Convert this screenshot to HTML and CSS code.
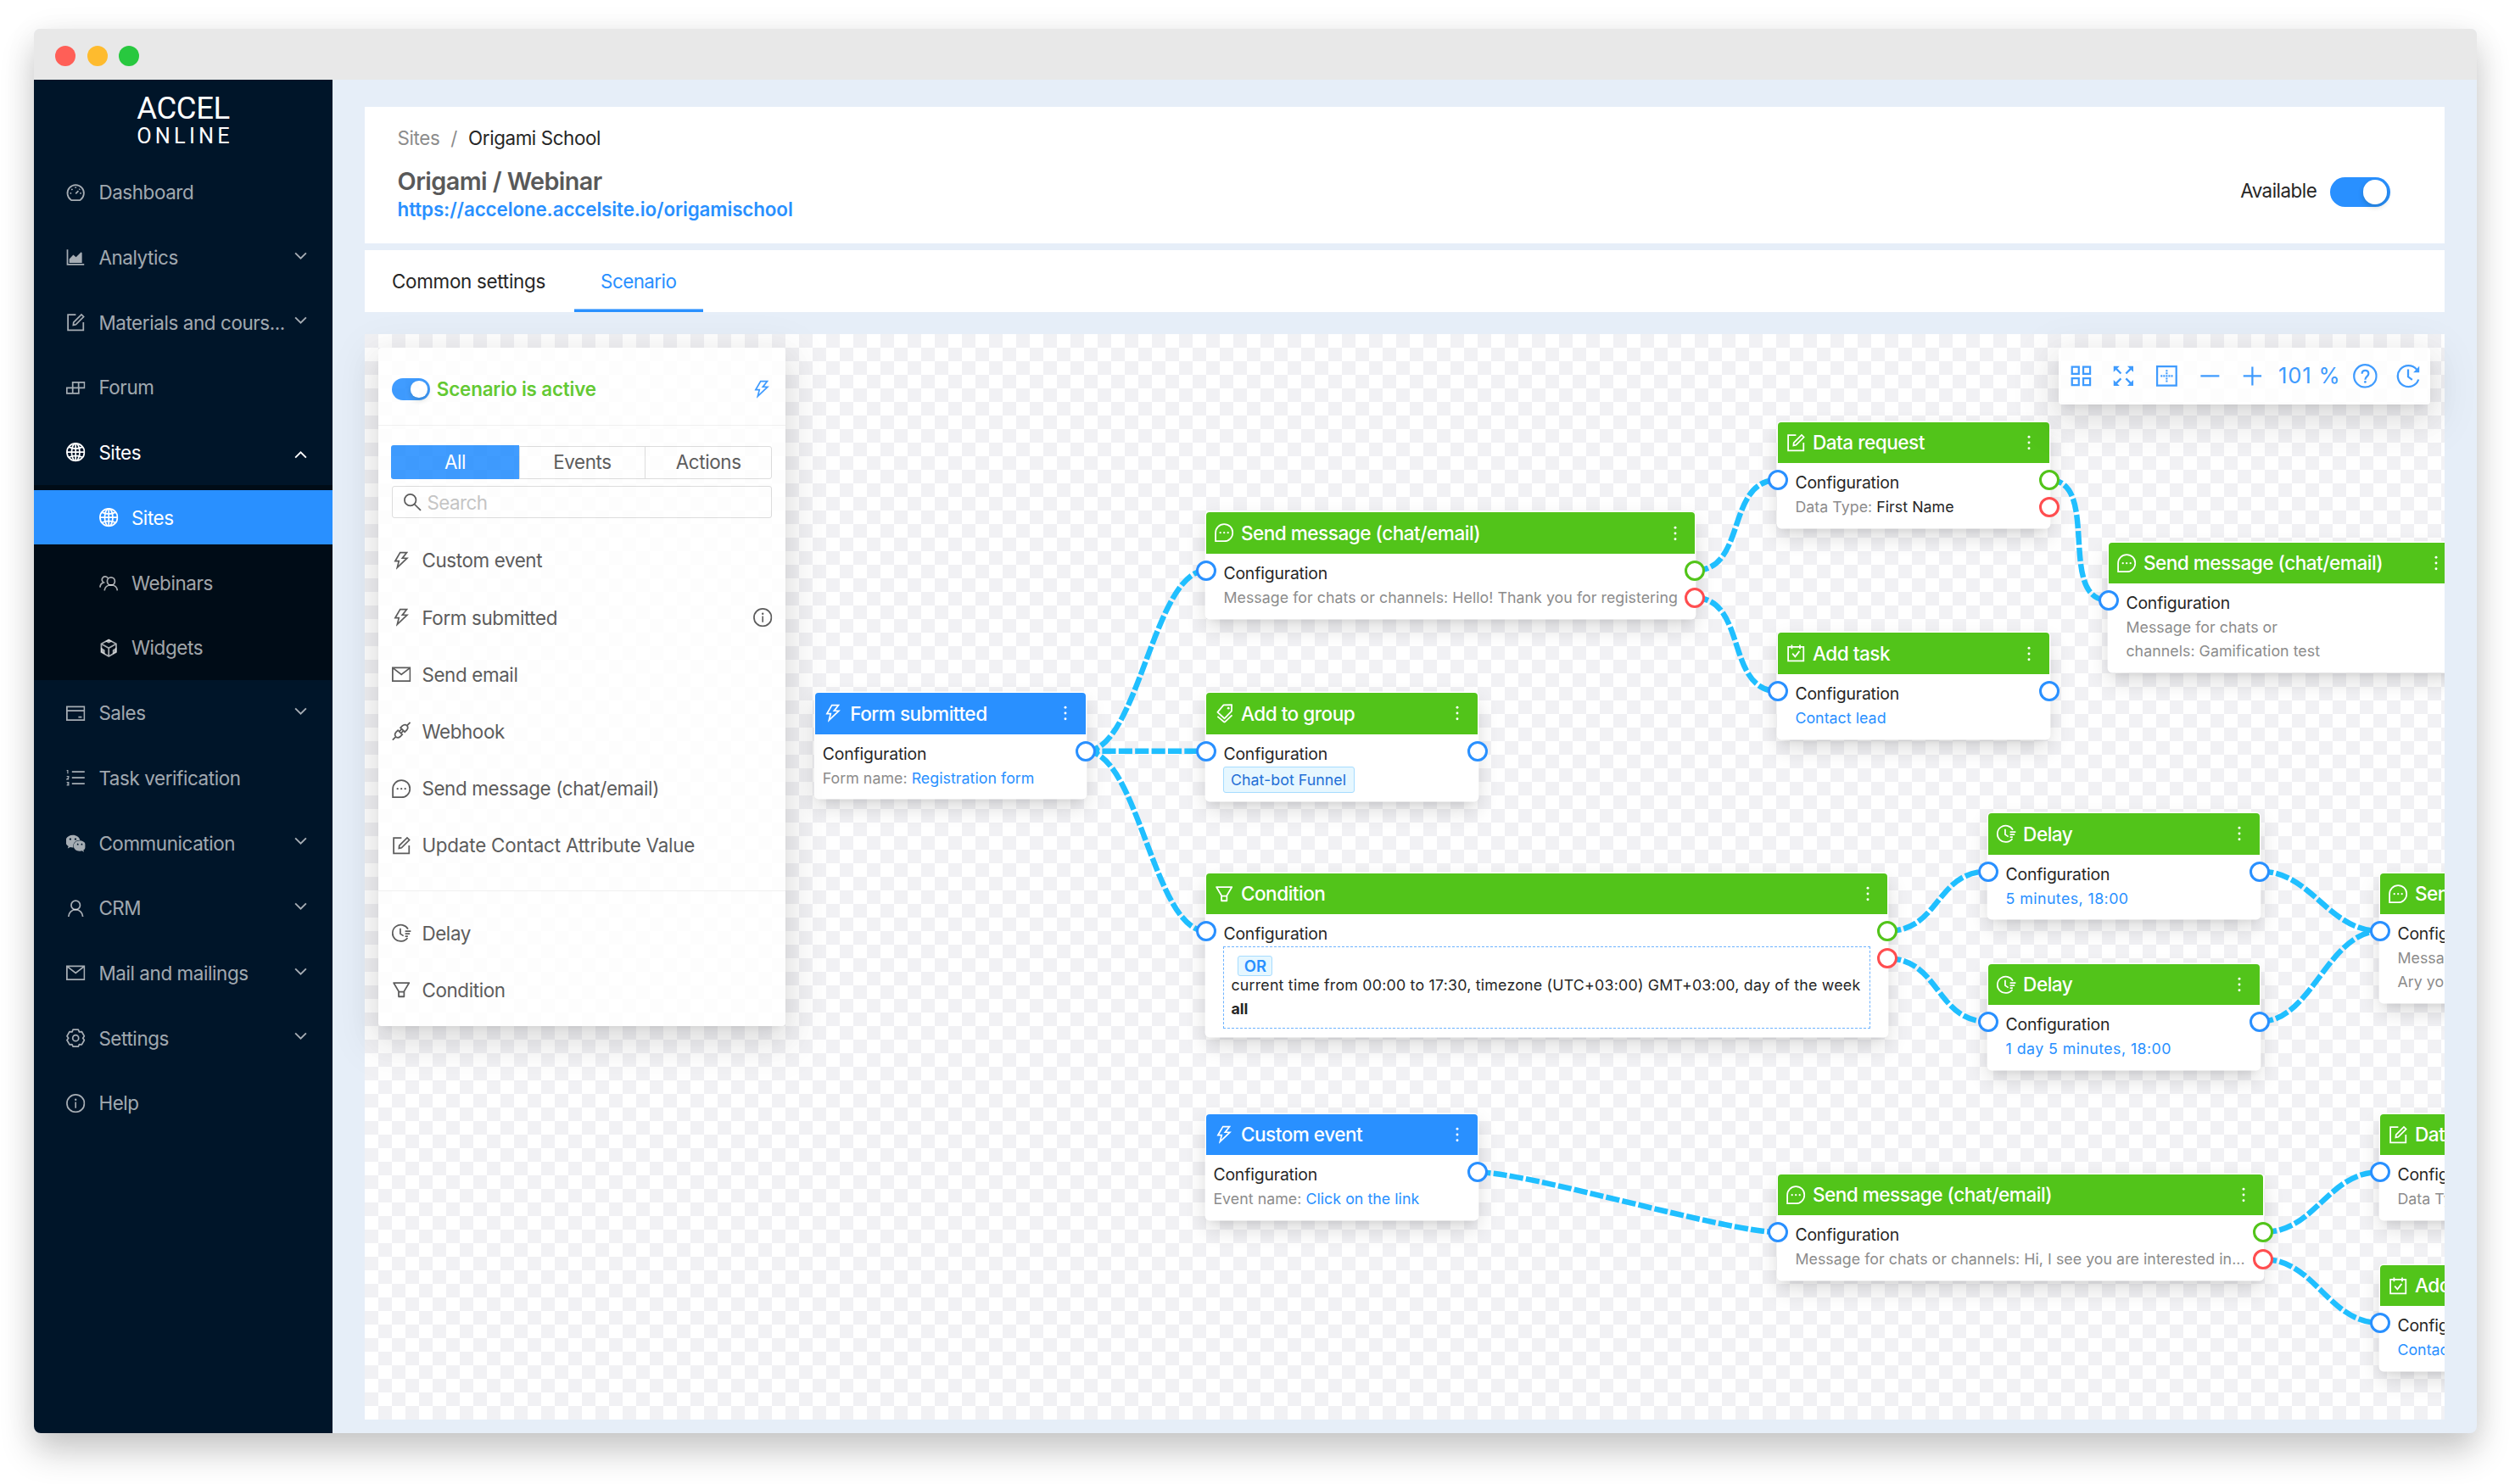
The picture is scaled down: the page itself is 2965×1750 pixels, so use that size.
FILE: index.html
```html
<!DOCTYPE html>
<html lang="en">
<head>
<meta charset="utf-8">
<title>Accel Online – Scenario</title>
<link rel="stylesheet" href="styles.css">
</head>
<body>
<svg class="sprite" aria-hidden="true">
  <symbol id="i-dashboard" viewBox="64 64 896 896"><path class="s" d="M290 852a388 388 0 1 1 444 0q-20 14-50 14H340q-30 0-50-14zM512 560l130-130M512 230v60M250 540h60M714 540h60M316 340l44 44M708 340l-30 30"/></symbol>
  <symbol id="i-area" viewBox="64 64 896 896"><path class="s" d="M124 150v710h790"/><path d="M210 780V600l190-200 130 110 240-240 40 40v470z"/></symbol>
  <symbol id="i-form" viewBox="64 64 896 896"><path class="s" d="M520 148H148v728h728V500M400 640l14-130 370-370 104 104-370 370z"/></symbol>
  <symbol id="i-build" viewBox="64 64 896 896"><path class="s" d="M96 520h560v260H96zM372 260h556v260H372zM372 520v260M650 260v260"/></symbol>
  <symbol id="i-globe" viewBox="64 64 896 896"><circle class="s" cx="512" cy="512" r="412"/><ellipse class="s" cx="512" cy="512" rx="190" ry="412"/><path class="s" d="M100 512h824M512 100v824M190 270q322 150 644 0M190 754q322-150 644 0"/></symbol>
  <symbol id="i-team" viewBox="64 64 896 896"><circle class="s" cx="620" cy="440" r="180"/><path class="s" d="M310 880c10-160 140-262 310-262s290 102 300 262M470 290a150 150 0 1 0-200 210c-90 30-160 100-170 230"/></symbol>
  <symbol id="i-box" viewBox="64 64 896 896"><path class="s" d="M512 120l350 196v392L512 904 162 708V316zM162 316l350 200 350-200M512 516v388"/><path d="M512 100l170 90-170 96-170-96zM150 480l180 120v200L150 700zM874 480L694 600v200l180-100z"/></symbol>
  <symbol id="i-card" viewBox="64 64 896 896"><path class="s" d="M100 196h824v632H100zM100 392h824M640 690h160"/></symbol>
  <symbol id="i-list" viewBox="64 64 896 896"><path class="s" d="M336 230h600M336 512h600M336 794h600"/><path class="t" d="M90 170h50v140M90 450h90v60l-90 70h100M90 730h90v130H90M110 795h70"/></symbol>
  <symbol id="i-wechat" viewBox="64 64 896 896"><path fill-rule="evenodd" d="M690 377c11 0 22 1 33 2-30-139-178-242-347-242C187 137 32 267 32 431c0 95 52 173 138 233l-34 104 120-60c43 9 78 17 121 17 11 0 21-1 32-1-7-24-11-48-11-73 0-151 130-274 292-274zM506 284c26 0 43 17 43 43s-17 43-43 43-52-17-52-43 26-43 52-43zM264 370c-26 0-52-17-52-43s26-43 52-43 43 17 43 43-17 43-43 43z"/><path fill-rule="evenodd" d="M1000 646c0-138-138-250-293-250-164 0-293 112-293 250s129 250 293 250c34 0 69-9 103-17l95 52-26-87c69-52 121-120 121-198zM612 603a34 34 0 1 1 1 0zM801 603a34 34 0 1 1 1 0z"/></symbol>
  <symbol id="i-user" viewBox="64 64 896 896"><circle class="s" cx="512" cy="362" r="210"/><path class="s" d="M174 906c8-186 150-334 338-334s330 148 338 334"/></symbol>
  <symbol id="i-mail" viewBox="64 64 896 896"><path class="s" d="M100 196h824v632H100zM120 220l392 300 392-300"/></symbol>
  <symbol id="i-gear" viewBox="64 64 896 896"><path class="s" stroke-linejoin="round" d="M389 110H635L682 218L798 205L921 418L852 512L921 606L798 819L682 806L635 914H389L342 806L226 819L103 606L172 512L103 418L226 205L342 218z"/><circle class="s" cx="512" cy="512" r="140"/></symbol>
  <symbol id="i-info" viewBox="64 64 896 896"><circle class="s" cx="512" cy="512" r="410"/><circle cx="512" cy="336" r="48"/><path d="M480 448h64v288h-64z"/></symbol>
  <symbol id="i-bolt" viewBox="64 64 896 896"><path d="M848 359.3H627.7L825.8 109c4.1-5.3.4-13-6.3-13H436c-2.8 0-5.5 1.5-6.9 4L170 547.5c-3.1 5.3.7 12 6.9 12h174.4l-89.4 357.6c-1.9 7.8 7.5 13.3 13.3 7.7L853.5 373c5.2-4.9 1.7-13.7-5.5-13.7zM378.2 732.5l60.3-241H281.1l189.6-327.4h224.6L487 427.4h211L378.2 732.5z"/></symbol>
  <symbol id="i-api" viewBox="64 64 896 896"><path class="s" d="M96 928l130-130M798 226L928 96M470 350l90-90c70-60 160-60 215-12 48 55 48 145-12 215l-90 90zM554 674l-90 90c-70 60-160 60-215 12-48-55-48-145 12-215l90-90zM411 531l110-110M493 613l110-110"/></symbol>
  <symbol id="i-msg" viewBox="64 64 896 896"><path class="s" d="M108 914V512a404 404 0 1 1 404 402z"/><circle cx="332" cy="512" r="46"/><circle cx="512" cy="512" r="46"/><circle cx="692" cy="512" r="46"/></symbol>
  <symbol id="i-delay" viewBox="64 64 896 896"><path class="s" d="M824 330A388 388 0 1 0 800 740M462 290v260l150 100M690 430h290M690 552h220M690 674h130"/></symbol>
  <symbol id="i-filter" viewBox="64 64 896 896"><path d="M880.1 154H143.9c-24.5 0-39.8 26.7-27.5 48L349 597.4V838c0 17.7 14.2 32 31.8 32h262.4c17.6 0 31.8-14.3 31.8-32V597.4L907.7 202c12.2-21.3-3.1-48-27.6-48zM603.4 798H420.6V642h182.9v156zm9.6-236.6l-9.5 16.6h-183l-9.5-16.6L212.7 226h598.6L613 561.4z"/></symbol>
  <symbol id="i-tags" viewBox="64 64 896 896"><path class="s" stroke-linejoin="round" d="M485 120l385-10-8 300-337 345-325-295zM200 660l325 275 360-340"/><circle cx="713" cy="270" r="56"/></symbol>
  <symbol id="i-task" viewBox="64 64 896 896"><path class="s" d="M148 220h728v660H148zM320 120v190M704 120v190M350 530l130 150 200-260"/></symbol>
  <symbol id="i-search" viewBox="64 64 896 896"><circle class="s" cx="412" cy="412" r="270"/><path class="s" d="M604 604l300 300"/></symbol>
  <symbol id="i-apps" viewBox="64 64 896 896"><path class="s" d="M180 180h250v250H180zM594 180h250v250H594zM180 594h250v250H180zM594 594h250v250H594z"/></symbol>
  <symbol id="i-expand" viewBox="64 64 896 896"><path class="s" d="M240 240l180 180M784 240L604 420M240 784l180-180M784 784L604 604"/><path d="M150 150h220L150 370zM874 150v220L654 150zM150 874V654l220 220zM874 874H654l220-220z"/></symbol>
  <symbol id="i-border" viewBox="64 64 896 896"><path class="s" d="M160 160h704v704H160z"/><path d="M480 290h64v64h-64zM480 385h64v64h-64zM480 480h64v64h-64zM480 575h64v64h-64zM480 670h64v64h-64zM290 480h64v64h-64zM385 480h64v64h-64zM575 480h64v64h-64zM670 480h64v64h-64z"/></symbol>
  <symbol id="i-minus" viewBox="64 64 896 896"><path class="s" d="M170 512h684"/></symbol>
  <symbol id="i-plus" viewBox="64 64 896 896"><path class="s" d="M180 512h664M512 170v684"/></symbol>
  <symbol id="i-help" viewBox="64 64 896 896"><circle class="s" cx="512" cy="512" r="410"/><path class="s" d="M394 430c0-160 240-160 240 0 0 100-122 90-122 220"/><circle cx="512" cy="732" r="42"/></symbol>
  <symbol id="i-clock" viewBox="64 64 896 896"><path class="s" d="M812 270A390 390 0 1 0 880 640M500 270v270l150 110"/><path d="M910 150v230H690z"/></symbol>
  <symbol id="i-more" viewBox="0 0 1024 1024"><circle cx="512" cy="200" r="68"/><circle cx="512" cy="512" r="68"/><circle cx="512" cy="824" r="68"/></symbol>
  <symbol id="i-chev" viewBox="0 0 16 10"><path d="M1.2 1.2L8 7.8l6.8-6.6" fill="none" stroke="currentColor" stroke-width="2"/></symbol>
</svg>

<div class="window">
  <div class="titlebar"><i class="dot red"></i><i class="dot yellow"></i><i class="dot green"></i></div>
  <div class="app">
    <aside class="sidebar">
      <div class="logo"><span class="logo-top">ACCEL</span><span class="logo-bottom">ONLINE</span></div>
      <ul class="menu">
        <li class="item"><svg class="ic"><use href="#i-dashboard"/></svg><span>Dashboard</span></li>
        <li class="item"><svg class="ic"><use href="#i-area"/></svg><span>Analytics</span><svg class="chev"><use href="#i-chev"/></svg></li>
        <li class="item"><svg class="ic"><use href="#i-form"/></svg><span>Materials and cours...</span><svg class="chev"><use href="#i-chev"/></svg></li>
        <li class="item"><svg class="ic"><use href="#i-build"/></svg><span>Forum</span></li>
        <li class="item open"><svg class="ic"><use href="#i-globe"/></svg><span>Sites</span><svg class="chev up"><use href="#i-chev"/></svg></li>
        <li>
          <ul class="submenu">
            <li class="item selected"><svg class="ic"><use href="#i-globe"/></svg><span>Sites</span></li>
            <li class="item"><svg class="ic"><use href="#i-team"/></svg><span>Webinars</span></li>
            <li class="item"><svg class="ic"><use href="#i-box"/></svg><span>Widgets</span></li>
          </ul>
        </li>
        <li class="item"><svg class="ic"><use href="#i-card"/></svg><span>Sales</span><svg class="chev"><use href="#i-chev"/></svg></li>
        <li class="item"><svg class="ic"><use href="#i-list"/></svg><span>Task verification</span></li>
        <li class="item"><svg class="ic"><use href="#i-wechat"/></svg><span>Communication</span><svg class="chev"><use href="#i-chev"/></svg></li>
        <li class="item"><svg class="ic"><use href="#i-user"/></svg><span>CRM</span><svg class="chev"><use href="#i-chev"/></svg></li>
        <li class="item"><svg class="ic"><use href="#i-mail"/></svg><span>Mail and mailings</span><svg class="chev"><use href="#i-chev"/></svg></li>
        <li class="item"><svg class="ic"><use href="#i-gear"/></svg><span>Settings</span><svg class="chev"><use href="#i-chev"/></svg></li>
        <li class="item"><svg class="ic"><use href="#i-info"/></svg><span>Help</span></li>
      </ul>
    </aside>

    <main class="main">
      <header class="page-head">
        <div class="head-text">
          <nav class="crumbs"><span class="muted">Sites</span><span class="sep">/</span><span>Origami School</span></nav>
          <h1 class="title">Origami / Webinar</h1>
          <a class="url">https://accelone.accelsite.io/origamischool</a>
        </div>
        <div class="avail"><span>Available</span><i class="switch"></i></div>
      </header>
      <nav class="tabs"><span class="tab">Common settings</span><span class="tab active">Scenario</span></nav>

      <section class="scenario">
        <div class="canvas">
          <svg class="edges" viewBox="0 0 2452 1280">
            <path d="M850 491.7C912 491.7 930 278.7 992 278.7"/>
            <path d="M850 491.7H992"/>
            <path d="M850 491.7C912 491.7 930 704 992 704"/>
            <path d="M1568 278.7C1630 278.7 1604 172 1666 172"/>
            <path d="M1568 311C1630 311 1604 421 1666 421"/>
            <path d="M1985.5 172C2047.5 172 1994 314 2056 314"/>
            <path d="M1795 704C1857 704 1852 633.5 1914 633.5"/>
            <path d="M1795 736.3C1857 736.3 1852 810.8 1914 810.8"/>
            <path d="M2234 633.5C2296 633.5 2314 704 2376 704"/>
            <path d="M2234 810.8C2296 810.8 2314 704 2376 704"/>
            <path d="M1311.5 988.3C1373.5 988.3 1604 1059 1666 1059"/>
            <path d="M2238 1059C2300 1059 2314 988 2376 988"/>
            <path d="M2238 1091C2300 1091 2314 1166 2376 1166"/>
          </svg>

          <article class="node trigger" style="left:531.3px;top:423.2px;width:318.7px">
            <header><svg class="ic"><use href="#i-bolt"/></svg><b>Form submitted</b><svg class="more"><use href="#i-more"/></svg></header>
            <div class="body"><p class="cfg">Configuration</p><p class="line">Form name: <a>Registration form</a></p></div>
            <i class="port out"></i>
          </article>

          <article class="node" style="left:992px;top:210.4px;width:576px">
            <header><svg class="ic"><use href="#i-msg"/></svg><b>Send message (chat/email)</b><svg class="more"><use href="#i-more"/></svg></header>
            <div class="body"><p class="cfg">Configuration</p><p class="line">Message for chats or channels: Hello! Thank you for registering</p></div>
            <i class="port in"></i><i class="port out yes"></i><i class="port out no"></i>
          </article>

          <article class="node" style="left:992px;top:423.2px;width:319.5px">
            <header><svg class="ic"><use href="#i-tags"/></svg><b>Add to group</b><svg class="more"><use href="#i-more"/></svg></header>
            <div class="body"><p class="cfg">Configuration</p><span class="tag">Chat-bot Funnel</span></div>
            <i class="port in"></i><i class="port out"></i>
          </article>

          <article class="node" style="left:992px;top:635.7px;width:803px">
            <header><svg class="ic"><use href="#i-filter"/></svg><b>Condition</b><svg class="more"><use href="#i-more"/></svg></header>
            <div class="body"><p class="cfg">Configuration</p>
              <div class="rule"><span class="or">OR</span><p class="cond wide">current time from 00:00 to 17:30, timezone (UTC+03:00) GMT+03:00, day of the week</p><p class="cond"><strong>all</strong></p></div>
            </div>
            <i class="port in"></i><i class="port out yes"></i><i class="port out no"></i>
          </article>

          <article class="node trigger" style="left:992px;top:919.8px;width:319.5px">
            <header><svg class="ic"><use href="#i-bolt"/></svg><b>Custom event</b><svg class="more"><use href="#i-more"/></svg></header>
            <div class="body"><p class="cfg">Configuration</p><p class="line">Event name: <a>Click on the link</a></p></div>
            <i class="port out"></i>
          </article>

          <article class="node" style="left:1666px;top:103.5px;width:319.5px">
            <header><svg class="ic"><use href="#i-form"/></svg><b>Data request</b><svg class="more"><use href="#i-more"/></svg></header>
            <div class="body"><p class="cfg">Configuration</p><p class="line">Data Type: <em>First Name</em></p></div>
            <i class="port in"></i><i class="port out yes"></i><i class="port out no"></i>
          </article>

          <article class="node" style="left:1666px;top:352.4px;width:319.5px">
            <header><svg class="ic"><use href="#i-task"/></svg><b>Add task</b><svg class="more"><use href="#i-more"/></svg></header>
            <div class="body"><p class="cfg">Configuration</p><p class="line"><a>Contact lead</a></p></div>
            <i class="port in"></i><i class="port out"></i>
          </article>

          <article class="node" style="left:2056px;top:245.7px;width:409px">
            <header><svg class="ic"><use href="#i-msg"/></svg><b>Send message (chat/email)</b><svg class="more"><use href="#i-more"/></svg></header>
            <div class="body"><p class="cfg">Configuration</p><p class="line">Message for chats or<br>channels: Gamification test</p></div>
            <i class="port in"></i>
          </article>

          <article class="node" style="left:1914.2px;top:565.2px;width:319.8px">
            <header><svg class="ic"><use href="#i-delay"/></svg><b>Delay</b><svg class="more"><use href="#i-more"/></svg></header>
            <div class="body"><p class="cfg">Configuration</p><p class="line num"><a>5 minutes, 18:00</a></p></div>
            <i class="port in"></i><i class="port out"></i>
          </article>

          <article class="node" style="left:1914.2px;top:742.5px;width:319.8px">
            <header><svg class="ic"><use href="#i-delay"/></svg><b>Delay</b><svg class="more"><use href="#i-more"/></svg></header>
            <div class="body"><p class="cfg">Configuration</p><p class="line num"><a>1 day 5 minutes, 18:00</a></p></div>
            <i class="port in"></i><i class="port out"></i>
          </article>

          <article class="node" style="left:2376px;top:635.7px;width:409px">
            <header><svg class="ic"><use href="#i-msg"/></svg><b>Send message (chat/email)</b></header>
            <div class="body"><p class="cfg">Configuration</p><p class="line">Message for chats or channels:<br>Ary you ready</p></div>
            <i class="port in"></i>
          </article>

          <article class="node" style="left:1666px;top:990.5px;width:572px">
            <header><svg class="ic"><use href="#i-msg"/></svg><b>Send message (chat/email)</b><svg class="more"><use href="#i-more"/></svg></header>
            <div class="body"><p class="cfg">Configuration</p><p class="line">Message for chats or channels: Hi, I see you are interested in...</p></div>
            <i class="port in"></i><i class="port out yes"></i><i class="port out no"></i>
          </article>

          <article class="node" style="left:2376px;top:919.7px;width:320px">
            <header><svg class="ic"><use href="#i-form"/></svg><b>Data request</b></header>
            <div class="body"><p class="cfg">Configuration</p><p class="line">Data Type:</p></div>
            <i class="port in"></i>
          </article>

          <article class="node" style="left:2376px;top:1097.5px;width:320px">
            <header><svg class="ic"><use href="#i-task"/></svg><b>Add task</b></header>
            <div class="body"><p class="cfg">Configuration</p><p class="line"><a>Contact lead</a></p></div>
            <i class="port in"></i>
          </article>
        </div>

        <div class="panel">
          <div class="panel-head"><i class="switch small"></i><b>Scenario is active</b><svg class="ic"><use href="#i-bolt"/></svg></div>
          <div class="seg"><span class="on">All</span><span>Events</span><span>Actions</span></div>
          <div class="search"><svg class="ic"><use href="#i-search"/></svg><span>Search</span></div>
          <ul class="actions">
            <li><svg class="ic"><use href="#i-bolt"/></svg><span>Custom event</span></li>
            <li><svg class="ic"><use href="#i-bolt"/></svg><span>Form submitted</span><svg class="ic info"><use href="#i-info"/></svg></li>
            <li><svg class="ic"><use href="#i-mail"/></svg><span>Send email</span></li>
            <li><svg class="ic"><use href="#i-api"/></svg><span>Webhook</span></li>
            <li><svg class="ic"><use href="#i-msg"/></svg><span>Send message (chat/email)</span></li>
            <li><svg class="ic"><use href="#i-form"/></svg><span class="long">Update Contact Attribute Value</span></li>
          </ul>
          <ul class="actions second">
            <li><svg class="ic"><use href="#i-delay"/></svg><span>Delay</span></li>
            <li><svg class="ic"><use href="#i-filter"/></svg><span>Condition</span></li>
          </ul>
        </div>

        <div class="toolbar">
          <svg class="ic"><use href="#i-apps"/></svg>
          <svg class="ic"><use href="#i-expand"/></svg>
          <svg class="ic"><use href="#i-border"/></svg>
          <svg class="ic"><use href="#i-minus"/></svg>
          <svg class="ic"><use href="#i-plus"/></svg>
          <span class="zoom">101 %</span>
          <svg class="ic"><use href="#i-help"/></svg>
          <svg class="ic"><use href="#i-clock"/></svg>
        </div>
      </section>
    </main>
  </div>
</div>
</body>
</html>
```

FILE: styles.css
```css
* { box-sizing: border-box; }
body {
  margin: 0;
  width: 2965px;
  height: 1750px;
  overflow: hidden;
  background: #fff;
  font-family: Inter, "Liberation Sans", sans-serif;
  font-size: 22.4px;
  line-height: 1.5715;
  color: #262626;
}
ul { list-style: none; margin: 0; padding: 0; }
p, h1 { margin: 0; }
.sprite { display: none; }
.ic { width: 22.4px; height: 22.4px; flex: none; fill: currentColor; overflow: visible; }
.s { fill: none; stroke: currentColor; stroke-width: 70; }
.t { fill: none; stroke: currentColor; stroke-width: 46; }

.window {
  width: 2880px;
  height: 1656px;
  margin: 34px 0 0 40px;
  border-radius: 7px 7px 8px 8px;
  overflow: hidden;
  background: #e6eef8;
  box-shadow: 0 22px 40px rgba(0, 0, 0, .2), 0 4px 40px rgba(0, 0, 0, .06);
}
.titlebar { height: 60px; background: #e8e8e8; display: flex; align-items: center; gap: 13.6px; padding: 4px 0 0 25px; }
.dot { width: 24px; height: 24px; border-radius: 50%; }
.red { background: #ff5f57; }
.yellow { background: #febb2e; }
.green { background: #28c83f; }
.app { display: flex; height: 1596px; }

.sidebar { width: 352px; background: #001529; color: rgba(255, 255, 255, .65); letter-spacing: -.0175em; }
.logo { height: 94.6px; padding-top: 14px; display: flex; flex-direction: column; align-items: center; color: #fff; font-family: Roboto, sans-serif; }
.logo-top { font-size: 36.5px; line-height: 40px; letter-spacing: -.4px; }
.logo-bottom { font-size: 25.3px; line-height: 24px; letter-spacing: 4.2px; margin: 1px -4px 0 0; }
.item { height: 64px; padding: 0 29.8px 0 38px; display: flex; align-items: center; white-space: nowrap; }
.item .ic { margin-right: 16px; }
.menu > .item { height: 76.7px; }
.chev { width: 15px; height: 10px; margin-left: auto; margin-top: -4px; flex: none; }
.up { transform: rotate(180deg); margin-top: 4px; }
.open { color: #fff; }
.submenu { background: #000c17; padding: 6.4px 0; display: flex; flex-direction: column; gap: 12.8px; }
.submenu .item { padding-left: 76.5px; }
.selected { background: #2990ff; color: #fff; }

.main { width: 2528px; padding: 32px 38px 16px; overflow: hidden; letter-spacing: -.018em; }
.page-head { height: 161px; background: #fff; padding: 19px 64.4px 0 38.6px; display: flex; justify-content: space-between; }
.crumbs { display: flex; line-height: 36px; }
.muted, .sep { color: #8c8c8c; }
.sep { margin: 0 13px; }
.title { margin-top: 14px; font-size: 28.8px; line-height: 38px; font-weight: 600; color: #595959; letter-spacing: -.02em; }
.url { display: block; margin-top: -1.5px; font-weight: 600; line-height: 30px; color: #2990ff; letter-spacing: -.005em; }
.avail { display: flex; align-items: center; gap: 16px; height: 35px; margin-top: 64px; letter-spacing: -.0228em; }
.avail span { margin-top: -3px; }
.switch { width: 70.4px; height: 35.2px; border-radius: 18px; background: #2990ff; display: flex; justify-content: flex-end; padding: 3.2px; }
.switch::after { content: ""; width: 28.8px; height: 28.8px; border-radius: 50%; background: #fff; box-shadow: 0 3px 6px rgba(0, 35, 11, .2); }
.switch.small { width: 44.8px; height: 25.6px; }
.switch.small::after { width: 19.2px; height: 19.2px; }

.tabs { height: 73px; margin-top: 8px; background: #fff; display: flex; gap: 1.6px; letter-spacing: -.0123em; }
.tab { padding: 0 32px; line-height: 73.5px; }
.tab.active { padding: 0 31.5px; color: #2990ff; letter-spacing: -.025em; box-shadow: inset 0 -3.5px #2990ff; }

.scenario { position: relative; height: 1280px; margin-top: 26px; }
.canvas {
  position: relative;
  width: 2452px;
  height: 1280px;
  overflow: hidden;
  background: conic-gradient(#fff 25%, #f1f1f4 0 50%, #fff 0 75%, #f1f1f4 0) 0 0 / 32px 32px;
}
.edges { position: absolute; inset: 0; width: 2452px; height: 1280px; }
.edges path { fill: none; stroke: #20bfff; stroke-width: 6.46; stroke-dasharray: 16.16 3.23; }

.node {
  position: absolute;
  min-height: 124.3px;
  background: #fff;
  border-radius: 4px;
  box-shadow: 0 0 0 1.4px #fff, 0 5px 10px -5px rgba(0, 0, 0, .12), 0 11px 26px rgba(0, 0, 0, .14);
}
.node header {
  height: 48.5px;
  padding: 0 12.5px 0 9.5px;
  display: flex;
  align-items: center;
  gap: 9px;
  background: #52c41a;
  color: #fff;
  border-radius: 4px 4px 0 0;
  white-space: nowrap;
}
.node.trigger header { background: #2990ff; }
.node b { font-weight: 500; font-size: 22.6px; letter-spacing: -.0225em; }
.more { width: 22px; height: 22px; margin-left: auto; fill: currentColor; }
.body { padding: 8px 20.4px 9.5px; white-space: nowrap; }
.trigger .body { padding-left: 8.4px; }
.cfg { font-size: 19.4px; line-height: 30px; letter-spacing: -.0083em; }
.line { font-size: 17.8px; line-height: 28.3px; color: #8c8c8c; letter-spacing: .002em; }
.line.num { letter-spacing: .024em; }
.line a { color: #2990ff; }
.line em { font-style: normal; color: #262626; }
.tag { display: block; width: 154.5px; height: 31px; padding: 0 7.6px; border: 1.6px solid #a6dcff; border-radius: 3px; background: #e6f7ff; color: #1f6fd6; font-size: 17.8px; line-height: 29px; letter-spacing: .002em; }
.rule { height: 96.5px; padding: 9.5px 8px 0; border: 1.6px dashed #6db3ff; }
.or { display: block; width: 41px; height: 24.5px; margin-left: 8px; border: 1.6px solid #a6dcff; border-radius: 3px; background: #e6f7ff; color: #2990ff; font-size: 18.5px; line-height: 22px; font-weight: 600; text-align: center; letter-spacing: 0; }
.cond { font-size: 17.8px; line-height: 28px; letter-spacing: 0; }
.cond.wide { margin-top: -3px; letter-spacing: .0121em; }

.port { position: absolute; width: 24px; height: 24px; top: 56.5px; border: 3px solid #2990ff; border-radius: 50%; background: #fff; }
.port.in { left: -12px; }
.port.out { right: -12px; }
.port.yes { border-color: #52c41a; }
.port.no { border-color: #ff4d4f; top: 88.8px; }

.panel, .toolbar {
  position: absolute;
  top: 16px;
  background: #fff;
  border-radius: 4px;
  opacity: .89;
  box-shadow: 0 5px 10px -6px rgba(0, 0, 0, .12), 0 14px 34px rgba(0, 0, 0, .1), 0 14px 50px 16px rgba(0, 0, 0, .06);
}
.panel { left: 16px; width: 480px; height: 800px; color: #4a4a4a; letter-spacing: -.0165em; }
.panel-head { height: 92px; padding: 7px 16.5px 0 16px; display: flex; align-items: center; gap: 8px; border-bottom: 1.6px solid #f0f0f0; }
.panel-head b { color: #52c41a; font-weight: 600; letter-spacing: -.0076em; }
.panel-head .ic { color: #2990ff; margin-left: auto; }
.seg { margin: 24px 16px 0; height: 38.8px; display: grid; grid-template-columns: repeat(3, 1fr); text-align: center; line-height: 36px; border: 1.6px solid #d9d9d9; border-radius: 3px; }
.seg > span + span { border-left: 1.6px solid #d9d9d9; }
.seg .on { margin: -1.6px 0 -1.6px -1.6px; padding-top: 1.6px; background: #2990ff; color: #fff; border-radius: 3px 0 0 3px; }
.search { margin: 8.6px 16px 0; height: 38px; padding: 0 12px; display: flex; align-items: center; gap: 6px; border: 1.6px solid #d9d9d9; border-radius: 3px; }
.search span { color: #bfbfbf; letter-spacing: -.0246em; }
.actions { padding: 16px 16px 19px; }
.actions li { height: 67.2px; display: flex; align-items: center; gap: 13px; }
.actions .info { margin-left: auto; }
.actions .long { letter-spacing: -.009em; }
.second { border-top: 1.6px solid #f0f0f0; }

.toolbar { right: 17px; width: 438px; height: 67px; padding: 0 11.5px; display: flex; align-items: center; justify-content: space-between; color: #2990ff; }
.toolbar .ic { width: 28.8px; height: 28.8px; }
.toolbar .ic .s { stroke-width: 64; }
.zoom { font-size: 25.6px; width: 74px; white-space: nowrap; letter-spacing: .033em; margin: 0 -8px 0 -6px; }
```
